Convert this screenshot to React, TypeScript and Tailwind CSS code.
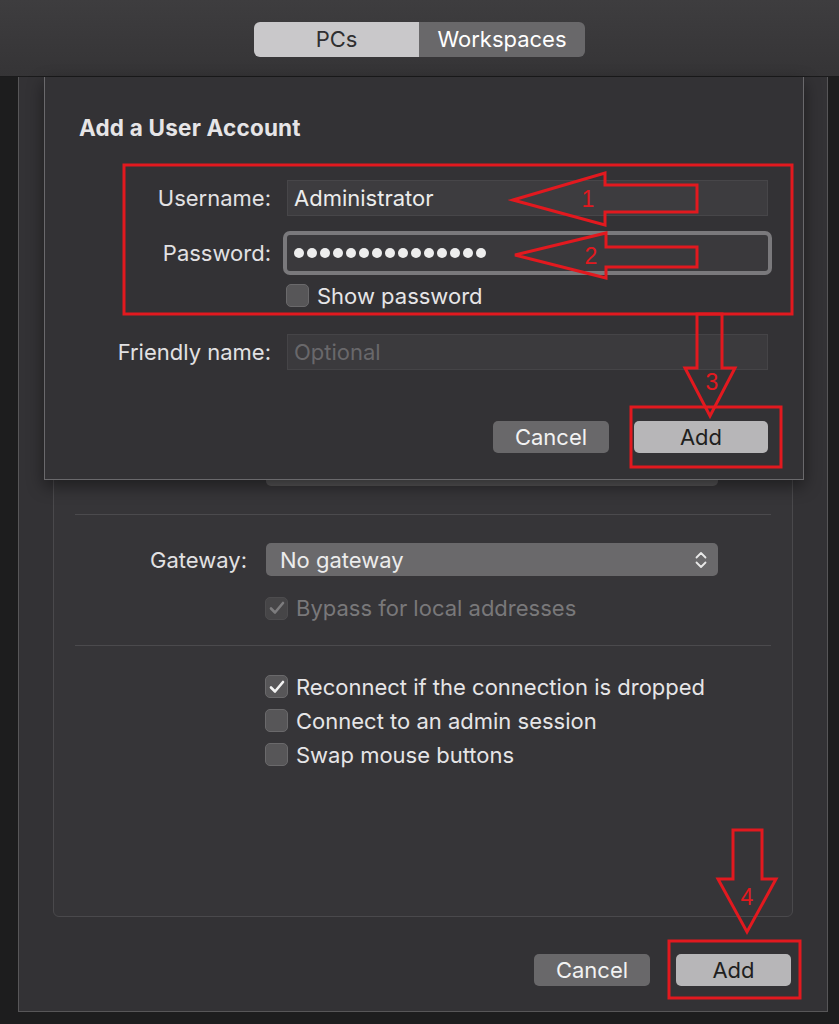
import React from 'react';

const RED = '#e2191f';

function Checkbox({ checked = false, dim = false }: { checked?: boolean; dim?: boolean }) {
  return (
    <div
      className={
        'flex h-[23px] w-[23px] shrink-0 items-center justify-center rounded-[5px] border ' +
        (dim ? 'border-[#4d4c4e] bg-[#464547]' : 'border-[#6a696b] bg-[#575658]')
      }
    >
      {checked && (
        <svg width="16" height="14" viewBox="0 0 16 14">
          <polyline
            points="2,7.5 6,11.5 14,2"
            fill="none"
            stroke={dim ? '#7d7c7e' : '#f2f2f2'}
            strokeWidth="2.6"
            strokeLinecap="round"
            strokeLinejoin="round"
          />
        </svg>
      )}
    </div>
  );
}

function Toolbar() {
  return (
    <div className="flex h-[77px] items-start justify-center border-b border-[#1b1b1c] bg-gradient-to-b from-[#3e3d3f] to-[#353436] pt-[22px]">
      <div className="flex h-[35px] overflow-hidden rounded-[6px] text-[22px]">
        <div className="flex w-[165px] items-center justify-center bg-[#c9c8ca] text-[#2f2f30]">PCs</div>
        <div className="flex w-[166px] items-center justify-center bg-[#69686a] text-white">Workspaces</div>
      </div>
    </div>
  );
}

function Window() {
  return (
    <div className="ml-[18px] flex h-[935px] w-[810px] flex-col border-x border-b border-[#575658] bg-[#333235]">
      <div className="ml-[34px] mt-[19px] flex h-[821px] w-[740px] flex-col rounded-[6px] border border-[#4a494c] bg-[#363538]">
        <div className="h-[355px] shrink-0" />
        <div className="ml-[212px] h-[34px] w-[452px] rounded-[5px] bg-[#555456]" />
        <div className="mx-[21px] mt-[28px] h-px bg-[#4b4a4d]" />
        <div className="mt-[28px] flex h-[33px] items-center leading-none">
          <div className="w-[193px] text-right text-[22px] text-[#e2e1e3]">Gateway:</div>
          <div className="ml-[19px] flex h-[33px] w-[452px] items-center justify-between rounded-[5px] bg-[#6a696b] pl-[14px] pr-[10px] text-[22px] text-[#ececec]">
            <span>No gateway</span>
            <svg width="14" height="20" viewBox="0 0 14 20">
              <polyline points="2.5,7.5 7,3 11.5,7.5" fill="none" stroke="#e8e8e8" strokeWidth="1.8" strokeLinecap="round" strokeLinejoin="round" />
              <polyline points="2.5,12.5 7,17 11.5,12.5" fill="none" stroke="#e8e8e8" strokeWidth="1.8" strokeLinecap="round" strokeLinejoin="round" />
            </svg>
          </div>
        </div>
        <div className="ml-[211px] mt-[20px] flex h-[24px] items-center gap-[8px] text-[22px] leading-none text-[#79787a]">
          <Checkbox checked dim />
          <span>Bypass for local addresses</span>
        </div>
        <div className="mx-[21px] mt-[25px] h-px bg-[#4b4a4d]" />
        <div className="ml-[211px] mt-[29px] flex flex-col gap-[11px] text-[22px] leading-none text-[#e6e5e7]">
          <div className="flex h-[23px] items-center gap-[8px]">
            <Checkbox checked />
            <span>Reconnect if the connection is dropped</span>
          </div>
          <div className="flex h-[23px] items-center gap-[8px]">
            <Checkbox />
            <span>Connect to an admin session</span>
          </div>
          <div className="flex h-[23px] items-center gap-[8px]">
            <Checkbox />
            <span>Swap mouse buttons</span>
          </div>
        </div>
      </div>
      <div className="mr-[36px] mt-[37px] flex justify-end gap-[26px] text-[22px]">
        <button className="h-[32px] w-[116px] rounded-[5px] bg-[#69686a] leading-none text-[#f2f2f2]">Cancel</button>
        <button className="h-[32px] w-[115px] rounded-[5px] bg-[#b7b6b8] leading-none text-[#1f1f20]">Add</button>
      </div>
    </div>
  );
}

function Sheet() {
  return (
    <div className="absolute left-[44px] top-[77px] flex h-[403px] w-[760px] flex-col border-x border-b border-[#6a696c] bg-[#333235] pl-[34px] pr-[35px] pt-[39px] text-[22px] leading-none shadow-[0_6px_16px_rgba(0,0,0,0.45)]">
      <div className="h-[24px] text-[22.5px] font-bold leading-[24px] tracking-[0.2px] text-[#e6e5e7]">Add a User Account</div>
      <div className="mt-[40px] flex items-center">
        <div className="w-[192px] text-right text-[#e2e1e3]">Username:</div>
        <div className="ml-[16px] flex h-[36px] w-[481px] items-center border border-[#474649] bg-[#3d3c3f] pl-[6px] text-[#ececec]">
          Administrator
        </div>
      </div>
      <div className="mt-[19px] flex items-center">
        <div className="w-[192px] text-right text-[#e2e1e3]">Password:</div>
        <div className="ml-[16px] flex h-[36px] w-[481px] items-center gap-[3px] rounded-[3px] bg-[#3a393c] pl-[7px] ring-4 ring-[#7a797c]">
          {Array.from({ length: 15 }).map((_, i) => (
            <div key={i} className="h-[10px] w-[10px] rounded-full bg-[#ededed]" />
          ))}
        </div>
      </div>
      <div className="ml-[207px] mt-[13px] flex h-[23px] items-center gap-[8px] text-[#e6e5e7]">
        <Checkbox />
        <span>Show password</span>
      </div>
      <div className="mt-[27px] flex items-center">
        <div className="w-[192px] text-right text-[#e2e1e3]">Friendly name:</div>
        <div className="ml-[16px] flex h-[36px] w-[481px] items-center border border-[#454447] bg-[#3b3a3d] pl-[6px] text-[#69686b]">
          Optional
        </div>
      </div>
      <div className="mt-[51px] flex justify-end gap-[25px]">
        <button className="h-[32px] w-[116px] rounded-[5px] bg-[#69686a] text-[#f2f2f2]">Cancel</button>
        <button className="h-[32px] w-[134px] rounded-[5px] bg-[#b7b6b8] text-[#1f1f20]">Add</button>
      </div>
    </div>
  );
}

function Annotations() {
  const s = { fill: 'none', stroke: RED, strokeWidth: 3, strokeLinejoin: 'miter' as const };
  const t = { fill: RED, fontSize: 23, fontFamily: '"Liberation Sans", sans-serif', textAnchor: 'middle' as const };
  return (
    <svg className="pointer-events-none absolute left-0 top-0" width="839" height="1024">
      <rect x="124" y="165" width="668" height="149" {...s} />
      <polygon points="513,200 605,173 605,185 697,185 697,212 605,212 605,225" {...s} />
      <text x="588" y="207" {...t}>1</text>
      <polygon points="515,255 606,233 606,247 697,247 697,267 606,267 606,278" {...s} />
      <text x="591" y="264" {...t}>2</text>
      <polygon points="697,314 722,314 722,368 735,368 710,416 685,368 697,368" {...s} />
      <text x="712" y="390" {...t}>3</text>
      <rect x="631" y="407" width="150" height="60" {...s} />
      <polygon points="733,830 762,830 762,879 776,879 747,932 718,879 733,879" {...s} />
      <text x="747" y="905" {...t}>4</text>
      <rect x="669" y="941" width="131" height="57" {...s} />
    </svg>
  );
}

export default function App() {
  return (
    <div className="relative h-[1024px] w-[839px] overflow-hidden bg-[#1d1d1e] font-['Inter','Liberation_Sans',sans-serif]">
      <Toolbar />
      <Window />
      <Sheet />
      <Annotations />
    </div>
  );
}
